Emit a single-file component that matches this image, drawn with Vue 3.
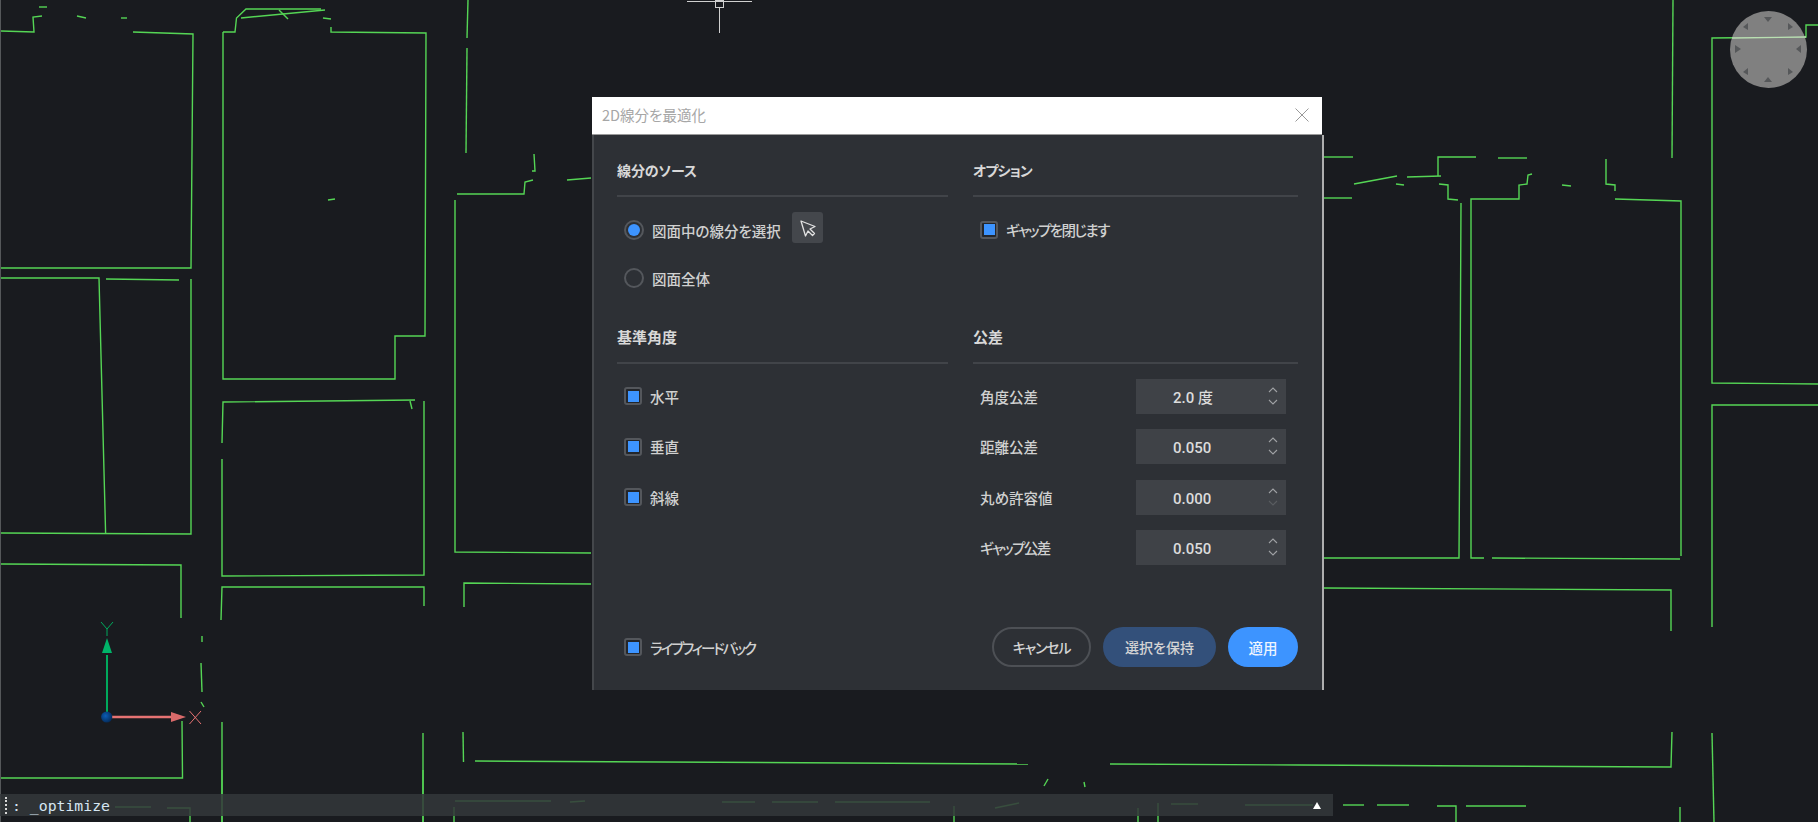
<script setup>
import { ref } from 'vue'

// drawing geometry, one polyline per entry
const cadLines = [
  '1,31 34,32 33,17 42,16', '39,7 47,7', '77,16 86,18', '121,18 127,18',
  '133,32 193,34 191,268 1,268', '1,278 99,278 105.6,533', '106,279 179,280', '191,279 191,534 1,533',
  '223,32 235,32 236.5,18 246,9 321,9', '241,18 325,10', '279,10 288,19', '323,18 331,19',
  '331,27 331,32 426,33 425,336 395,336 395,379 223,379 223,32', '328,200 335,199',
  '468,0 467,38', '467,48 466,153', '534,154 535,171 532,171', '567,180 591,178',
  '457,194 524,194 525,182 533,180', '455,200 455,552 591,553',
  '415,400 223,402 222,443', '222,459 222,576 424,575 424,401', '410,401 412,409',
  '221,620 222,587 424,587 424,606', '1,564 181,565 181,618', '202,636 202,642', '201,663 202,692', '201,702 204,707',
  '182,721 182.5,778 1,778', '222,722 222,822', '423,733 423,822', '463,732 463.5,762',
  '475,761 1028,764', '464,607 464,583 591,584',
  '1110,764 1300,765 1671,767 1672,732', '1044,786 1048,779', '1084,782 1085,787',
  '1343,805 1364,805', '1377,805 1409,805', '1437,806 1456,806 1456,822', '1466,806 1526,806', '1680,807 1680,822',
  '1324,157 1353,157', '1324,198 1352,198', '1354,184 1397,176',
  '1407,177 1441,176', '1438,176 1438,157 1476,157', '1396,184 1404,185', '1439,184 1448,185 1448,199 1458,200',
  '1461,203 1460,400 1459,558 1324,558', '1498,158 1527,158',
  '1484,558 1471,558 1471,199 1519,199 1519,185 1527,184 1528,175 1532,174',
  '1562,185 1571,186', '1606,159 1606,184 1615,185 1615,191',
  '1615,199 1681,201 1681,556', '1492,558 1680,559', '1324,588 1671,590 1671,631',
  '1712,627 1712,405 1818,405', '1712,733 1714,822', '1673,0 1672,158',
  '1818,384 1712,383 1712,38 1806,37 1806,25 1818,25',
  // lines running under the command bar
  '115,807 151,807', '167,808 190,808 190,822', '222,770 222,822', '423,770 423,822', '454,807 454,822',
  '455,801 551,801', '570,802 585,801', '722,802 755,802', '772,802 818,802', '835,802 930,802', '995,808 1019,803',
  '1158,803 1158,822', '1138,808 1138,822', '1171,804 1198,804', '1245,805 1313,805', '954,806 954,822'
]

// compass ticks around the view cube ring
const compassTicks = [
  '1764,17 1772,17 1768,22', '1764,82 1772,82 1768,77',
  '1735,45 1735,53 1741,49', '1801,45 1801,53 1796,49',
  '1743,27 1748,23 1748,30', '1793,27 1788,23 1788,30',
  '1743,72 1748,68 1748,75', '1793,72 1788,68 1788,75'
]

const sourceMode = ref('selection')
const angleChecks = ['水平', '垂直', '斜線']
const tolerances = [
  { label: '角度公差', value: '2.0 度' },
  { label: '距離公差', value: '0.050' },
  { label: '丸め許容値', value: '0.000', downOff: true },
  { label: 'ギャップ公差', value: '0.050', tight: true }
]
</script>

<template>
  <div class="workspace">
    <svg class="cad" width="1818" height="822" viewBox="0 0 1818 822">
      <defs>
        <radialGradient id="ball" cx="0.4" cy="0.4" r="0.7">
          <stop offset="0" stop-color="#0b5cb5" />
          <stop offset="1" stop-color="#04264f" />
        </radialGradient>
      </defs>
      <rect x="0" y="0" width="1" height="822" fill="#55585a" />
      <polyline v-for="(pts, i) in cadLines" :key="i" :points="pts" class="wire" />

      <!-- crosshair -->
      <g class="cross">
        <path d="M687 1.5H752M719.5 8V33" />
        <rect x="715.5" y="0.5" width="8" height="7" />
      </g>

      <!-- compass -->
      <circle cx="1768.5" cy="49.5" r="38.5" fill="#808080" />
      <polyline points="1732,38 1806,37" fill="none" stroke="#b9e0b2" stroke-width="1.4" />
      <polygon v-for="(t, i) in compassTicks" :key="'t' + i" :points="t" fill="#56585a" />

      <!-- UCS icon -->
      <path d="M107 655V712" stroke="#00a95c" stroke-width="2" />
      <polygon points="107,638 102,653 112,653" fill="#00b368" />
      <path d="M101 622L107 629L113 622M107 629V636" stroke="#00a95c" stroke-width="1" fill="none" />
      <path d="M112 717H172" stroke="#e67373" stroke-width="2.4" />
      <polygon points="171,712 186,717 171,722" fill="#d96a6a" />
      <path d="M189.5 711L201 724M201 711L189.5 724" stroke="#e67373" stroke-width="1" fill="none" />
      <circle cx="106.7" cy="717" r="5.6" fill="url(#ball)" />
    </svg>

    <div class="dialog">
      <div class="titlebar">
        <span>2D線分を最適化</span>
        <svg class="close" width="14" height="14" viewBox="0 0 14 14">
          <path d="M0.5 0.5L13.5 13.5M13.5 0.5L0.5 13.5" />
        </svg>
      </div>

      <div class="body">
        <div class="sections">
          <section class="section">
            <h3 class="head-mixed">線分のソース</h3>
            <div class="source-list">
              <div class="radio-row">
                <span class="radio" :class="{ on: sourceMode === 'selection' }"></span>
                <span>図面中の線分を選択</span>
                <button class="pick">
                  <svg width="31" height="31" viewBox="0 0 31 31">
                    <path d="M9 9L23 14.5L18 17L22.5 21.5L20.5 23.5L16 19L13.5 24Z" />
                  </svg>
                </button>
              </div>
              <div class="radio-row">
                <span class="radio" :class="{ on: sourceMode === 'all' }"></span>
                <span>図面全体</span>
              </div>
            </div>
          </section>

          <section class="section">
            <h3 class="head-kana">オプション</h3>
            <div class="option-list">
              <label class="check-row"><i class="check"></i><span class="tight">ギャップを閉じます</span></label>
            </div>
          </section>

          <section class="section">
            <h3>基準角度</h3>
            <div class="rows">
              <label v-for="c in angleChecks" :key="c" class="check-row"><i class="check"></i>{{ c }}</label>
            </div>
          </section>

          <section class="section">
            <h3>公差</h3>
            <div class="rows">
              <div v-for="t in tolerances" :key="t.label" class="tol-row">
                <span :class="{ tight: t.tight }">{{ t.label }}</span>
                <div class="spin">
                  <span class="spin-value">{{ t.value }}</span>
                  <svg class="spin-arrows" width="10" height="20" viewBox="0 0 10 20">
                    <path d="M1 6L5 2L9 6" />
                    <path d="M1 14L5 18L9 14" :class="{ off: t.downOff }" />
                  </svg>
                </div>
              </div>
            </div>
          </section>
        </div>

        <div class="footer">
          <label class="check-row"><i class="check"></i><span class="tighter">ライブフィードバック</span></label>
          <div class="actions">
            <button class="btn ghost">キャンセル</button>
            <button class="btn keep">選択を保持</button>
            <button class="btn apply">適用</button>
          </div>
        </div>
      </div>
    </div>

    <div class="cmdbar">
      <span class="grip"></span>
      <span class="cmd">: _optimize</span>
      <span class="caret"></span>
    </div>
  </div>
</template>

<style>
html, body {
  margin: 0;
  background: #191b1f;
  overflow: hidden;
}
</style>

<style scoped>
.workspace {
  position: relative;
  width: 1818px;
  height: 822px;
  background: #191b1f;
  overflow: hidden;
  font-family: "Noto Sans CJK JP", sans-serif;
  font-feature-settings: "palt";
}

.cad {
  position: absolute;
  left: 0;
  top: 0;
  display: block;
}

.wire {
  fill: none;
  stroke: #55d655;
  stroke-width: 1.4;
}

.cross path,
.cross rect {
  fill: none;
  stroke: #d0d0d0;
  stroke-width: 1;
}

.dialog {
  position: absolute;
  left: 592px;
  top: 97px;
  width: 732px;
}

.titlebar {
  display: flex;
  align-items: center;
  justify-content: space-between;
  height: 35px;
  margin-right: 2px;
  padding: 0 13px 2px 10px;
  background: #fff;
  border-bottom: 1px solid #9a9a9a;
  color: #a6a6a6;
  font-size: 14.5px;
}

.close path {
  stroke: #999;
  stroke-width: 1;
  fill: none;
}

.body {
  display: flex;
  flex-direction: column;
  justify-content: space-between;
  box-sizing: border-box;
  height: 555px;
  padding: 25px 24px 23px 23px;
  background: #2d3035;
  border-left: 2px solid #44474b;
  border-right: 2px solid #aeaeae;
  color: #d0d0d0;
  font-size: 14.5px;
  font-weight: 500;
}

.sections {
  display: grid;
  grid-template-columns: 331px 325px;
  grid-template-rows: 167px auto;
  column-gap: 25px;
}

.section h3 {
  margin: 0;
  height: 35px;
  line-height: 20px;
  font-size: 15px;
  font-weight: 700;
  color: #d8d8d8;
  border-bottom: 2px solid #414449;
}

.section h3.head-mixed {
  font-size: 14px;
  letter-spacing: -0.1px;
}

.section h3.head-kana {
  font-size: 14px;
  letter-spacing: -0.9px;
}

.tight {
  letter-spacing: -1.6px;
}

.tighter {
  letter-spacing: -2px;
}

.source-list {
  display: flex;
  flex-direction: column;
  gap: 12px;
  padding: 15px 0 0 7px;
}

.radio-row {
  display: flex;
  align-items: center;
  gap: 8px;
  height: 36px;
}

.radio {
  box-sizing: border-box;
  display: flex;
  align-items: center;
  justify-content: center;
  width: 20px;
  height: 20px;
  border: 2px solid #54575c;
  border-radius: 50%;
}

.radio.on::after {
  content: "";
  width: 12px;
  height: 12px;
  border-radius: 50%;
  background: #3d94ff;
}

.pick {
  width: 31px;
  height: 31px;
  margin: -5px 0 0 3px;
  padding: 0;
  border: none;
  border-radius: 3px;
  background: #44474c;
}

.pick svg {
  display: block;
}

.pick path {
  fill: none;
  stroke: #e2e2e2;
  stroke-width: 1.3;
  stroke-linejoin: round;
}

.option-list {
  padding: 15px 0 0 7px;
}

.check-row {
  display: flex;
  align-items: center;
  gap: 8px;
  height: 35px;
}

.check {
  box-sizing: border-box;
  display: flex;
  align-items: center;
  justify-content: center;
  width: 18px;
  height: 18px;
  border: 2px solid #54575c;
  border-radius: 3px;
  background: #24262a;
}

.check::after {
  content: "";
  width: 11px;
  height: 11px;
  background: #3d94ff;
}

.rows {
  display: flex;
  flex-direction: column;
  gap: 15.5px;
  padding: 14.5px 12px 0 7px;
}

.tol-row {
  display: flex;
  align-items: center;
  justify-content: space-between;
  height: 35px;
}

.spin {
  position: relative;
  box-sizing: border-box;
  width: 150px;
  height: 35px;
  padding-left: 37px;
  line-height: 35px;
  background: #3f4247;
}

.spin-value {
  font-family: Roboto, "Noto Sans CJK JP", sans-serif;
  font-size: 15px;
  font-weight: 500;
  color: #dcdcdc;
}

.spin-arrows {
  position: absolute;
  right: 8px;
  top: 7px;
}

.spin-arrows path {
  fill: none;
  stroke: #a0a2a5;
  stroke-width: 1.1;
}

.spin-arrows path.off {
  stroke: #5a5d61;
}

.footer {
  display: flex;
  align-items: center;
  justify-content: space-between;
  padding-left: 7px;
}

.actions {
  display: flex;
  gap: 12px;
}

.btn {
  box-sizing: border-box;
  height: 40px;
  padding: 0;
  border: none;
  border-radius: 20px;
  font-family: inherit;
  font-feature-settings: inherit;
  font-size: 14px;
  font-weight: 500;
  color: #d4d4d4;
}

.ghost {
  width: 99px;
  background: transparent;
  border: 2px solid #4d5055;
  letter-spacing: -1.2px;
}

.keep {
  width: 113px;
  background: #33507a;
}

.apply {
  width: 70px;
  background: #3d94ff;
  color: #eef5ff;
  font-size: 14.5px;
}

.cmdbar {
  position: absolute;
  left: 0;
  top: 794px;
  display: flex;
  align-items: center;
  width: 1333px;
  height: 22px;
  background: rgba(51, 56, 58, 0.86);
  color: #d5e6f2;
}

.grip {
  width: 0;
  height: 17px;
  margin-left: 5px;
  border-left: 2px dotted #d8d8d8;
}

.cmd {
  margin-left: 5px;
  font-family: "DejaVu Sans Mono", monospace;
  font-size: 14.8px;
  white-space: pre;
  flex: 1;
}

.caret {
  width: 0;
  height: 0;
  margin-right: 12px;
  border-left: 4px solid transparent;
  border-right: 4px solid transparent;
  border-bottom: 7px solid #fff;
}
</style>
